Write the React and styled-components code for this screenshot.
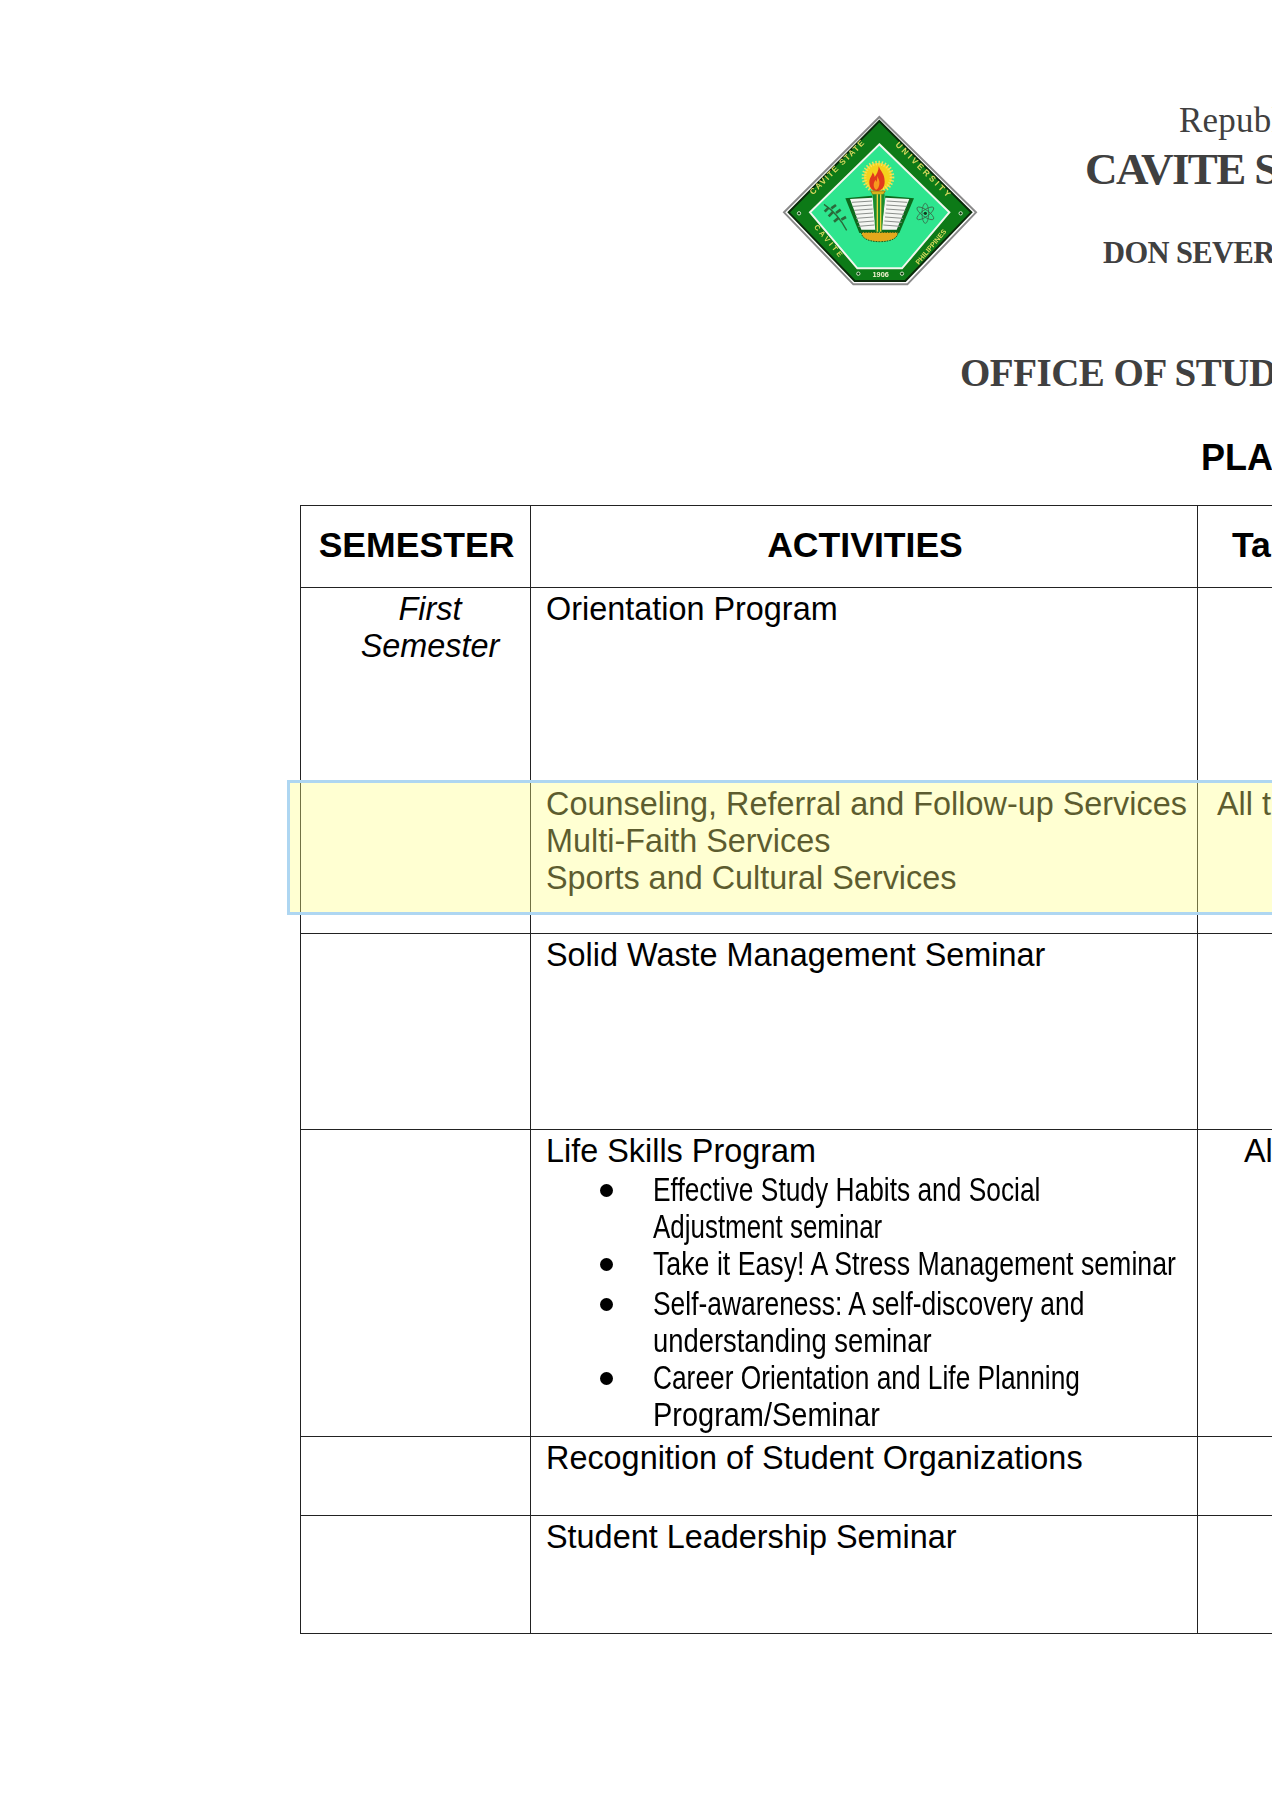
import React from "react";
import styled, { createGlobalStyle } from "styled-components";

const GlobalStyle = createGlobalStyle`
	html, body {
		margin: 0;
		padding: 0;
		background: #fff;
	}
`

const Page = styled.div`
	position: relative;
	width: 1272px;
	height: 1800px;
	overflow: hidden;
	font-family: "Liberation Sans", Arial, sans-serif;
	color: #000;
`

const Letterhead = styled.header`
	display: flex;
	padding: 105px 0 0 770px;
	height: 505px;
	box-sizing: border-box;
`

const LogoMark = styled.svg`
	flex: none;
	filter: blur(0.45px);
`

const HeadLines = styled.div`
	display: flex;
	flex-direction: column;
	white-space: nowrap;
`

const HeadLine = styled.div`
	margin-left: ${p => p.$indent}px;
	margin-top: ${p => p.$top}px;
	font-family: ${p => p.$sans ? '"Liberation Sans", Arial, sans-serif' : '"Liberation Serif", "Times New Roman", serif'};
	font-size: ${p => p.$size}px;
	font-weight: ${p => p.$weight || 700};
	color: ${p => p.$sans ? '#000' : '#404040'};
	line-height: ${p => p.$lh}px;
	letter-spacing: ${p => p.$spacing || 0}px;
`

const Table = styled.table`
	margin-left: 300px;
	width: 1500px;
	table-layout: fixed;
	border-collapse: collapse;
	font-size: 32.4px;
	line-height: 37px;
`

const Row = styled.tr`
	height: ${p => p.$h}px;
`

const Head = styled.th`
	border: 1px solid #222;
	padding: 0 0 2px ${p => p.$pad ?? 2}px;
	font-size: 35.6px;
	font-weight: 700;
	text-align: ${p => p.$left ? 'left' : 'center'};
	white-space: nowrap;
`

const Cell = styled.td`
	border: 1px solid #222;
	padding: 3px 0 0 ${p => p.$pad ?? 15}px;
	vertical-align: top;
	white-space: nowrap;
`

const SemesterName = styled.div`
	font-style: italic;
	text-align: center;
	padding-left: 29px;
`

const Bullets = styled.ul`
	margin: 1px 0 0;
	padding: 0 0 0 107px;
	list-style: none;
`

const Bullet = styled.li`
	position: relative;
	margin-top: ${p => p.$gap || 0}px;
	font-size: 33px;
	line-height: 37.2px;

	&::before {
		content: "";
		position: absolute;
		left: -53px;
		top: 13px;
		width: 13px;
		height: 13px;
		border-radius: 50%;
		background: #000;
	}
`

// no narrow face is installed, so the regular one is squeezed line by line
const NarrowLine = styled.span`
	display: block;
	transform: scaleX(${p => p.$squeeze});
	transform-origin: left center;
`

const Highlight = styled.div`
	position: absolute;
	left: 287px;
	top: 780px;
	width: 1100px;
	height: 135px;
	box-sizing: border-box;
	border: 3px solid #aed6f1;
	background: rgba(255, 255, 130, 0.36);
`

const Logo = () => (
	<LogoMark width="220" height="190" viewBox="0 0 660 570">
		<polygon points="328,36 618,322 412,538 250,538 42,322" fill="#fff" stroke="#8a8a8a" strokeWidth="6" />
		<polygon points="328,48 604,322 406,528 254,528 56,322" fill="#0d7a17" stroke="#0a2a0a" strokeWidth="6" />
		<polygon points="328,118 538,322 396,490 262,490 120,322" fill="#2ee58e" stroke="#f2f7ef" strokeWidth="6" />
		<g fill="#d9d85e" fontFamily="Liberation Sans, sans-serif" fontWeight="700" fontSize="25" textAnchor="middle">
			<text transform="translate(208 192) rotate(-45)" letterSpacing="4">CAVITE  STATE</text>
			<text transform="translate(456 202) rotate(45)" letterSpacing="8">UNIVERSITY</text>
			<text transform="translate(172 415) rotate(50)" letterSpacing="8" fontSize="22">CAVITE</text>
			<text transform="translate(488 430) rotate(-50)" fontSize="21">PHILIPPINES</text>
			<text x="332" y="517" fontSize="22" fill="#f3f3d0">1906</text>
		</g>
		<g fill="#0a3a0a" stroke="#cfe8c8" strokeWidth="3">
			<circle cx="87" cy="325" r="5" />
			<circle cx="572" cy="325" r="5" />
			<circle cx="265" cy="506" r="5" />
			<circle cx="396" cy="506" r="5" />
		</g>
		<circle cx="324" cy="216" r="42" fill="#f5d21c" stroke="#f3e25a" strokeWidth="14" strokeDasharray="4 5" />
		<path d="M326 184c6 16 18 22 18 46 0 14-8 28-24 28s-22-12-22-26c0-14 8-18 10-30 4 6 6 10 6 14 6-8 12-18 12-32z" fill="#e2391c" />
		<path d="M322 212c3 10 8 14 6 26-1 8-5 16-9 16s-8-6-8-14c0-8 3-10 5-16 2 3 3 5 3 7 2-4 3-11 3-19z" fill="#f79a1e" />
		<path d="M302 258h44l-8 14h-28z" fill="#d8b21c" stroke="#7a6a10" strokeWidth="2" />
		<polygon points="226,280 306,272 322,384 268,384" fill="#0c6a1c" />
		<polygon points="432,280 346,272 330,384 388,384" fill="#0c6a1c" />
		<polygon points="240,282 308,278 318,374 274,374" fill="#f4f6f2" />
		<polygon points="418,282 346,278 334,374 380,374" fill="#f4f6f2" />
		<g stroke="#8b8f8b" strokeWidth="3">
			<path d="M246 292l60-4M249 304l58-4M252 316l56-4M255 328l54-4M258 340l52-4M262 352l50-4M265 364l48-4" />
			<path d="M412 292l-62-4M409 304l-60-4M406 316l-58-4M402 328l-56-4M399 340l-54-4M395 352l-52-4M390 364l-50-4" />
		</g>
		<path d="M308 268h36l-8 112h-20z" fill="#1e8a2c" />
		<path d="M322 268v112M332 268v112" stroke="#e8d23a" strokeWidth="4" />
		<path d="M274 382h110c0 16-18 28-55 28s-55-12-55-28z" fill="#e3a81c" stroke="#1c5c1c" strokeWidth="3" strokeDasharray="5 3" />
		<g stroke="#2a6a3a" strokeWidth="4" fill="none">
			<path d="M162 298c24 16 48 40 68 78" />
			<path d="M176 308l-12 12M190 320l-14 14M206 338l-14 12M184 310l14-10M198 324l14-10M214 344l14-8" strokeWidth="8" />
		</g>
		<g stroke="#3a6a4a" strokeWidth="2.5" fill="none">
			<ellipse cx="466" cy="325" rx="30" ry="10" transform="rotate(35 466 325)" />
			<ellipse cx="466" cy="325" rx="30" ry="10" transform="rotate(-35 466 325)" />
			<ellipse cx="466" cy="325" rx="30" ry="10" transform="rotate(90 466 325)" />
		</g>
		<circle cx="466" cy="325" r="5" fill="#123a1c" />
	</LogoMark>
)

const App = () => {
	return (
		<Page>
			<GlobalStyle />
			<Letterhead>
				<Logo />
				<HeadLines>
					<HeadLine $indent={189} $top={-2} $size={35} $weight={400} $lh={36} $spacing={0.2}>Republic of the Philippines</HeadLine>
					<HeadLine $indent={95} $top={4} $size={45} $lh={52} $spacing={-1.6}>CAVITE STATE UNIVERSITY</HeadLine>
					<HeadLine $indent={113} $top={40} $size={30.5} $lh={36} $spacing={-0.6}>DON SEVERINO DE LAS ALAS CAMPUS</HeadLine>
					<HeadLine $indent={-30} $top={79} $size={39} $lh={46} $spacing={-0.5}>OFFICE OF STUDENT AFFAIRS AND SERVICES</HeadLine>
					<HeadLine $indent={211} $top={42} $size={36} $lh={40} $sans>PLAN OF ACTIVITIES</HeadLine>
				</HeadLines>
			</Letterhead>
			<Table>
				<colgroup>
					<col style={{ width: 230 }} />
					<col style={{ width: 667 }} />
					<col />
				</colgroup>
				<tbody>
					<Row $h={82}>
						<Head>SEMESTER</Head>
						<Head>ACTIVITIES</Head>
						<Head $left $pad={34}>Target Clientele</Head>
					</Row>
					<Row $h={195}>
						<Cell $pad={0}><SemesterName>First<br />Semester</SemesterName></Cell>
						<Cell>Orientation Program</Cell>
						<Cell />
					</Row>
					<Row $h={151}>
						<Cell />
						<Cell>
							Counseling, Referral and Follow-up Services<br />
							Multi-Faith Services<br />
							Sports and Cultural Services
						</Cell>
						<Cell $pad={19}>All the students</Cell>
					</Row>
					<Row $h={196}>
						<Cell />
						<Cell>Solid Waste Management Seminar</Cell>
						<Cell />
					</Row>
					<Row $h={307}>
						<Cell />
						<Cell>
							Life Skills Program
							<Bullets>
								<Bullet>
									<NarrowLine $squeeze={0.798}>Effective Study Habits and Social</NarrowLine>
									<NarrowLine $squeeze={0.786}>Adjustment seminar</NarrowLine>
								</Bullet>
								<Bullet>
									<NarrowLine $squeeze={0.81}>Take it Easy! A Stress Management seminar</NarrowLine>
								</Bullet>
								<Bullet $gap={2}>
									<NarrowLine $squeeze={0.8}>Self-awareness: A self-discovery and</NarrowLine>
									<NarrowLine $squeeze={0.83}>understanding seminar</NarrowLine>
								</Bullet>
								<Bullet>
									<NarrowLine $squeeze={0.797}>Career Orientation and Life Planning</NarrowLine>
									<NarrowLine $squeeze={0.877}>Program/Seminar</NarrowLine>
								</Bullet>
							</Bullets>
						</Cell>
						<Cell $pad={46}>All students</Cell>
					</Row>
					<Row $h={79}>
						<Cell />
						<Cell>Recognition of Student Organizations</Cell>
						<Cell />
					</Row>
					<Row $h={118}>
						<Cell />
						<Cell>Student Leadership Seminar</Cell>
						<Cell />
					</Row>
				</tbody>
			</Table>
			<Highlight />
		</Page>
	)
}

export default App;
